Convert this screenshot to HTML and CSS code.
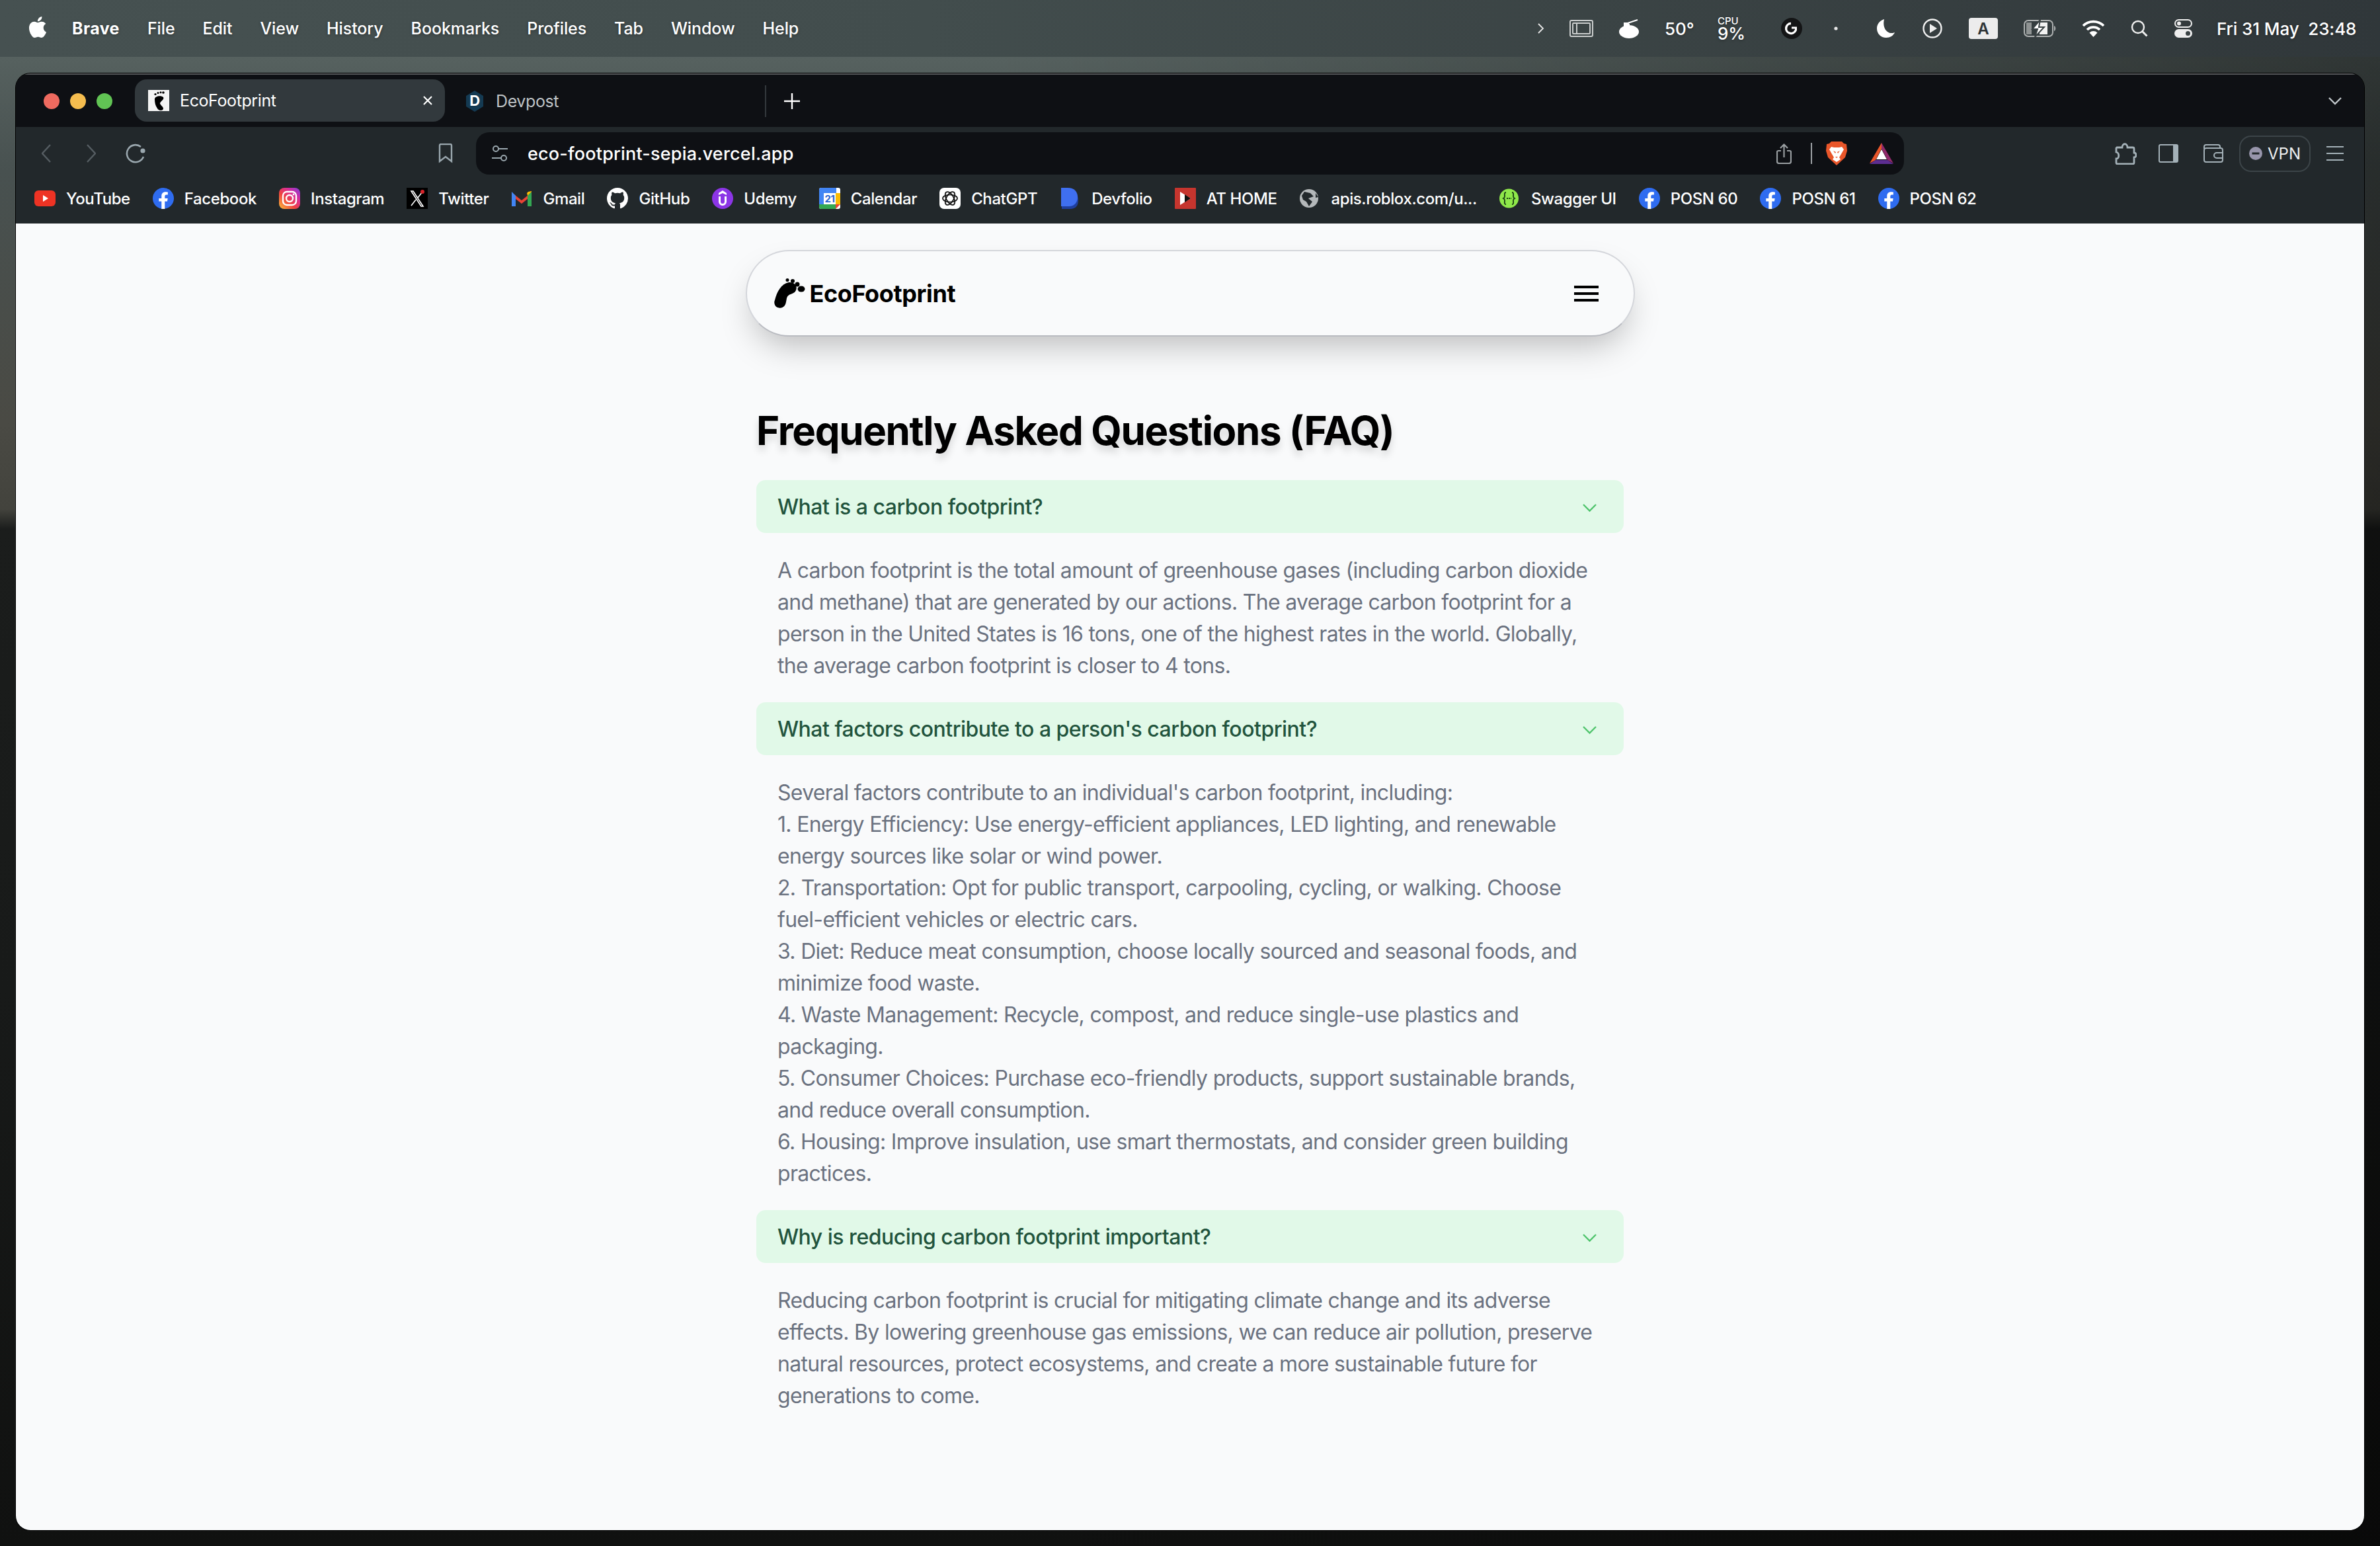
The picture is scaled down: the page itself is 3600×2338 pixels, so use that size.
FILE: index.html
```html
<!DOCTYPE html>
<html lang="en">
<head>
<meta charset="utf-8">
<title>EcoFootprint</title>
<link rel="stylesheet" href="styles.css">
</head>
<body>
<svg class="sprite" aria-hidden="true"><symbol id="fb" viewBox="0 0 32 32"><circle cx="16" cy="16" r="16" fill="#2f6cf0"/><path fill="#fff" d="M22 20.6l.7-4.6h-4.4v-3c0-1.3.6-2.5 2.6-2.5h2V6.6s-1.8-.3-3.6-.3c-3.6 0-6 2.2-6 6.2V16h-4v4.6h4V32h5V20.6z"/></symbol></svg>
<header class="menubar">
  <div class="menu-left">
    <svg class="apple" viewBox="0 0 24 24"><path fill="#fff" d="M12.152 6.896c-.948 0-2.415-1.078-3.96-1.04-2.04.027-3.91 1.183-4.961 3.014-2.117 3.675-.546 9.103 1.519 12.09 1.013 1.454 2.208 3.09 3.792 3.039 1.52-.065 2.09-.987 3.935-.987 1.831 0 2.35.987 3.96.948 1.637-.026 2.676-1.48 3.676-2.948 1.156-1.688 1.636-3.325 1.662-3.415-.039-.013-3.182-1.221-3.22-4.857-.026-3.04 2.48-4.494 2.597-4.559-1.429-2.09-3.623-2.324-4.39-2.376-2-.156-3.675 1.09-4.61 1.09zM15.53 3.83c.843-1.012 1.4-2.427 1.245-3.83-1.207.052-2.662.805-3.532 1.818-.78.896-1.454 2.338-1.273 3.714 1.338.104 2.715-.688 3.559-1.701"/></svg>
    <b class="menu-app">Brave</b><span>File</span><span>Edit</span><span>View</span><span>History</span><span>Bookmarks</span><span>Profiles</span><span>Tab</span><span>Window</span><span>Help</span>
  </div>
  <div class="status">
    <svg width="10" height="16" viewBox="0 0 10 16"><path d="M1 1l7 7-7 7" fill="none" stroke="#e8e8e8" stroke-width="1.8"/></svg>
    <svg width="36" height="26" viewBox="0 0 36 26"><g fill="none" stroke="#c9cccc" stroke-width="2"><rect x="1" y="1" width="34" height="24" rx="2"/><rect x="5" y="5" width="26" height="16" rx="1"/><path d="M11 5v16"/></g></svg>
    <svg width="30" height="30" viewBox="0 0 30 30"><ellipse cx="15" cy="20" rx="15" ry="10" fill="#fff"/><path d="M10 8l18-6M8 7h7v4H8z" fill="#fff" stroke="#fff" stroke-width="2"/></svg>
    <span class="st-text">50°</span>
    <span class="cpu"><small>CPU</small><em>9%</em></span>
    <svg width="32" height="32" viewBox="0 0 32 32"><circle cx="16" cy="16" r="16" fill="#141516"/><path d="M15 8.5a7.5 7.5 0 1 0 7 10.5" fill="none" stroke="#fff" stroke-width="3.4"/><path d="M16 13.5h8v6h-3v-3h-5z" fill="#fff"/></svg>
    <svg class="dot" width="6" height="6" viewBox="0 0 6 6"><circle cx="3" cy="3" r="2.6" fill="#e8e8e8"/></svg>
    <svg width="28" height="28" viewBox="0 0 28 28"><path fill="#fff" d="M11 0C4 2 0 8 0 14c0 8 6 14 14 14 6 0 11-3 13-8-2 1-4 1-5 1C15 21 8 13 11 0z"/></svg>
    <svg width="30" height="30" viewBox="0 0 30 30"><circle cx="15" cy="15" r="13.5" fill="none" stroke="#eee" stroke-width="2.4"/><path d="M11 8l11 7-11 7z" fill="#eee"/></svg>
    <span class="st-a">A</span>
    <svg width="50" height="26" viewBox="0 0 50 26"><rect x="1" y="1" width="43" height="24" rx="6" fill="none" stroke="#aeb1b1" stroke-width="2"/><path d="M4 4h8v18H4z" fill="#8f9393"/><path d="M24 4h12v18H24z" fill="#f2f2f2"/><path d="M46 9c3 1 3 7 0 8z" fill="#aeb1b1"/><path d="M25 0L13 14h8l-4 12 14-15h-8z" fill="#fff" stroke="#3a4244" stroke-width="2"/></svg>
    <svg width="35" height="26" viewBox="0 0 35 26"><g fill="none" stroke="#fff" stroke-width="3.6"><path d="M2 9a22 22 0 0 1 31 0"/><path d="M8 15a13.5 13.5 0 0 1 19 0"/></g><path d="M17.5 26l-6-6.500a8.500 8.500 0 0 1 12 0z" fill="#fff"/></svg>
    <svg width="26" height="26" viewBox="0 0 26 26"><circle cx="11" cy="11" r="9" fill="none" stroke="#eee" stroke-width="2.4"/><path d="M17.500 17.500l7 7" stroke="#eee" stroke-width="3"/></svg>
    <svg width="27" height="28" viewBox="0 0 27 28"><rect x="1" y="1" width="25" height="11" rx="5.500" fill="none" stroke="#eee" stroke-width="2"/><circle cx="7" cy="6.500" r="3" fill="#eee"/><rect y="15" width="27" height="13" rx="6.500" fill="#eee"/><circle cx="20.500" cy="21.500" r="3.500" fill="#3a4244"/></svg>
    <span class="st-text date">Fri 31 May&nbsp;&nbsp;23:48</span>
  </div>
</header>

<main class="window">
  <div class="tabstrip">
    <div class="lights"><i class="light red"></i><i class="light amber"></i><i class="light green"></i></div>
    <div class="tab">
      <svg class="ico" viewBox="0 0 32 32"><rect width="32" height="32" fill="#f4f4f4"/><path d="M10 14C10 9 20 8 23 11c2 3-4 6-5 9 0 3 5 5 5 8 0 4-7 4-9 0-3-4-4-9-4-14z"/><circle cx="11" cy="6.500" r="1.600"/><circle cx="15" cy="4.500" r="1.500"/><circle cx="19" cy="3.800" r="1.500"/><circle cx="23" cy="4" r="1.800"/></svg>
      <span class="tab-title">EcoFootprint</span>
      <svg class="tab-x" width="16" height="16" viewBox="0 0 16 16"><path d="M2 2l12 12M14 2L2 14" stroke="#fff" stroke-width="2.200"/></svg>
    </div>
    <div class="tab-plain">
      <svg class="ico" viewBox="0 0 32 32"><path d="M16 0l13 8v16l-13 8-13-8V8z" fill="#143a52"/><text x="16" y="23" class="dv-letter">D</text></svg>
      <span class="tab-dim">Devpost</span>
    </div>
    <i class="tab-sep"></i>
    <svg class="plus" width="24" height="24" viewBox="0 0 24 24"><path d="M12 0v24M0 12h24" stroke="#fff" stroke-width="2.400"/></svg>
    <svg class="tabs-down" width="20" height="12" viewBox="0 0 20 12"><path d="M1 1l9 9 9-9" fill="none" stroke="#c0c6ca" stroke-width="2.400"/></svg>
  </div>

  <div class="toolbar">
    <svg class="t-back" width="14" height="28" viewBox="0 0 14 28"><path d="M13 1L1 14l12 13" fill="none" stroke="#555d62" stroke-width="2.400"/></svg>
    <svg class="t-fwd" width="14" height="28" viewBox="0 0 14 28"><path d="M1 1l12 13L1 27" fill="none" stroke="#555d62" stroke-width="2.400"/></svg>
    <svg class="t-reload" width="32" height="32" viewBox="0 0 32 32"><path d="M27 21a13 13 0 1 1-4-15" fill="none" stroke="#9aa7ae" stroke-width="2.600"/><circle cx="26" cy="12" r="3.600" fill="#9aa7ae"/></svg>
    <svg class="t-mark" width="22" height="30" viewBox="0 0 22 30"><path d="M2 27V3a2 2 0 0 1 2-2h14a2 2 0 0 1 2 2v24l-9-7z" fill="none" stroke="#9aa7ae" stroke-width="2.400"/></svg>
    <div class="urlbar">
      <svg width="24" height="26" viewBox="0 0 24 26"><g fill="none" stroke="#9aa7ae" stroke-width="2"><circle cx="6" cy="6" r="4"/><circle cx="18" cy="20" r="4"/><path d="M10 6h14M0 20h14"/></g></svg>
      <span class="url">eco-footprint-sepia.vercel.app</span>
      <svg class="u-share" width="23" height="31" viewBox="0 0 23 31"><g fill="none" stroke="#9a9fa2" stroke-width="2.200"><path d="M7 11H3a2 2 0 0 0-2 2v14a3 3 0 0 0 3 3h15a3 3 0 0 0 3-3V13a2 2 0 0 0-2-2h-4"/><path d="M11.500 21V2M6 7l5.500-5.500L17 7"/></g></svg>
      <i class="u-sep"></i>
      <svg class="u-brave" width="32" height="36" viewBox="0 0 32 36"><path d="M8 0h16l3 3 4 1 1 10-3 10-13 12L3 24 0 14 1 4l4-1z" fill="#e9562a"/><path d="M8 8l4 1h8l4-1 3 4-4 7-3 5 2 3-6 4-6-4 2-3-3-5-4-7z" fill="#fff"/><path d="M11 14l4 2-1 2zM21 14l-4 2 1 2zM14 23h4l-2 2z" fill="#e9562a"/></svg>
      <svg class="u-bat" width="36" height="32" viewBox="0 0 36 32"><path d="M18 0L0 31l9-5L18 9z" fill="#e9562a"/><path d="M18 0l18 31-9-5-9-17z" fill="#8f2a6b"/><path d="M0 32h36l-9-6H9z" fill="#5c2d91"/><path d="M18 10l8 15H10z" fill="#fff"/></svg>
    </div>
    <svg class="t-ext" width="33" height="34" viewBox="0 0 33 34"><path d="M3 8h8c0-7 8-7 8 0h8a2 2 0 0 1 2 2v6c4 0 4 7 0 7v8a2 2 0 0 1-2 2H4a2 2 0 0 1-2-2v-6c5 0 5-9 0-10V9z" fill="none" stroke="#a4b1b8" stroke-width="2.800"/></svg>
    <svg class="t-side" width="30" height="28" viewBox="0 0 30 28"><rect x="1" y="1" width="28" height="26" rx="2" fill="none" stroke="#a4b1b8" stroke-width="2"/><rect x="22" y="1" width="7" height="26" fill="#a4b1b8"/></svg>
    <svg class="t-wallet" width="30" height="28" viewBox="0 0 30 28"><g fill="none" stroke="#a4b1b8" stroke-width="2"><path d="M1 7V4a3 3 0 0 1 3-3h18a3 3 0 0 1 3 3v2"/><rect x="1" y="6" width="28" height="21" rx="3"/><path d="M29 13H20a4 4 0 0 0 0 8h9"/></g></svg>
    <div class="vpn"><svg width="20" height="20" viewBox="0 0 20 20"><circle cx="10" cy="10" r="10" fill="#9795ab"/><rect x="4.500" y="8.500" width="11" height="3" fill="#22282b"/></svg><span>VPN</span></div>
    <div class="t-burger"><i></i><i></i><i></i></div>
  </div>

  <nav class="bookmarks">
    <a><svg class="ico" viewBox="0 0 32 32"><rect y="4" width="32" height="24" rx="6" fill="#ee3324"/><path d="M13 11l8 5-8 5z" fill="#fff"/></svg>YouTube</a>
    <a><svg class="ico"><use href="#fb"/></svg>Facebook</a>
    <a><svg class="ico" viewBox="0 0 32 32"><defs><linearGradient id="ig" x1="0" y1="1" x2="1" y2="0"><stop offset="0" stop-color="#fdc13a"/><stop offset=".4" stop-color="#f0433f"/><stop offset=".7" stop-color="#d62d9c"/><stop offset="1" stop-color="#7a3fe0"/></linearGradient></defs><rect width="32" height="32" rx="8" fill="url(#ig)"/><rect x="6" y="6" width="20" height="20" rx="6" fill="none" stroke="#fff" stroke-width="2.400"/><circle cx="16" cy="16" r="5" fill="none" stroke="#fff" stroke-width="2.400"/><circle cx="22" cy="10" r="1.400" fill="#fff"/></svg>Instagram</a>
    <a><svg class="ico" viewBox="0 0 32 32"><rect width="32" height="32" fill="#000"/><path d="M7 5l15 23h3L10 5zM24 6l-7 9M14 18l-7 9" fill="none" stroke="#fff" stroke-width="1.600"/><circle cx="24" cy="6" r="3" fill="#d8232a"/></svg>Twitter</a>
    <a><svg class="ico" viewBox="0 0 32 32"><path d="M1 7l15 12L31 7v5L16 24 1 12z" fill="#ea4335"/><path d="M1 6v22h6V12z" fill="#4285f4"/><path d="M31 6v22h-6V12z" fill="#34a853"/><path d="M25 12l6-6v-1l-5 1-2 2z" fill="#fbbc04"/></svg>Gmail</a>
    <a><svg class="ico" viewBox="0 0 16 16"><path fill="#fff" d="M8 0C3.58 0 0 3.58 0 8c0 3.54 2.29 6.53 5.47 7.59.4.07.55-.17.55-.38 0-.19-.01-.82-.01-1.49-2.01.37-2.53-.49-2.69-.94-.09-.23-.48-.94-.82-1.13-.28-.15-.68-.52-.01-.53.63-.01 1.08.58 1.23.82.72 1.21 1.87.87 2.33.66.07-.52.28-.87.51-1.07-1.78-.2-3.64-.89-3.64-3.95 0-.87.31-1.59.82-2.15-.08-.2-.36-1.02.08-2.12 0 0 .67-.21 2.2.82.64-.18 1.32-.27 2-.27.68 0 1.36.09 2 .27 1.53-1.04 2.2-.82 2.2-.82.44 1.1.16 1.92.08 2.12.51.56.82 1.27.82 2.15 0 3.07-1.87 3.75-3.65 3.95.29.25.54.73.54 1.48 0 1.07-.01 1.93-.01 2.2 0 .21.15.46.55.38A8.013 8.013 0 0016 8c0-4.42-3.58-8-8-8z"/></svg>GitHub</a>
    <a><svg class="ico" viewBox="0 0 32 32"><circle cx="16" cy="16" r="16" fill="#8c35e6"/><path d="M10 13v8a6 6 0 0 0 12 0v-8h-3v8a3 3 0 0 1-6 0v-8z" fill="#fff"/><path d="M16 4l6 4v3l-6-3-6 3V8z" fill="#fff"/></svg>Udemy</a>
    <a><svg class="ico" viewBox="0 0 32 32"><rect width="32" height="32" rx="3" fill="#fff"/><path d="M0 8V3a3 3 0 0 1 3-3h23v8z" fill="#4285f4"/><path d="M0 8h7v17H0z" fill="#4285f4"/><path d="M25 8h7v17h-7z" fill="#fbbc04"/><path d="M0 25h25v7H3a3 3 0 0 1-3-3z" fill="#34a853"/><path d="M25 25h7l-7 7z" fill="#ea4335"/><text x="16" y="22" class="cal-num">21</text></svg>Calendar</a>
    <a><svg class="ico" viewBox="0 0 32 32"><rect width="32" height="32" rx="7" fill="#fff"/><g fill="none" stroke="#111" stroke-width="1.700"><ellipse cx="16" cy="16" rx="11" ry="5.500"/><ellipse cx="16" cy="16" rx="11" ry="5.500" transform="rotate(60 16 16)"/><ellipse cx="16" cy="16" rx="11" ry="5.500" transform="rotate(120 16 16)"/></g></svg>ChatGPT</a>
    <a><svg class="ico" viewBox="0 0 32 32"><path d="M2 2h10c10 0 15 6 15 15 0 8-4 13-12 13H2z" fill="#1f3f9e" transform="translate(1 2)"/><path d="M2 0h10c10 0 15 6 15 14 0 8-5 14-13 14H2z" fill="#3f6ff0"/></svg>Devfolio</a>
    <a><svg class="ico" viewBox="0 0 32 32"><rect width="32" height="32" rx="1" fill="#c6352e"/><path d="M8 6l16 10L8 26z" fill="#fff"/><path d="M15 10l9 6-9 6z" fill="#111"/></svg>AT HOME</a>
    <a><svg class="ico" viewBox="0 0 32 32"><circle cx="14" cy="16" r="14" fill="#b4b8ba"/><path d="M7 6l9 2 5 5-8 3 6 5-5 7-4-7-5-3-2-6zM24 8l4 6-4 1z" fill="#22282b"/></svg>apis.roblox.com/u...</a>
    <a><svg class="ico" viewBox="0 0 32 32"><circle cx="14.500" cy="16" r="14.500" fill="#8fe84a"/><g fill="none" stroke="#173b12" stroke-width="1.800"><path d="M10 7c-3 0-2 3-2 6 0 2-2 3-2 3s2 1 2 3c0 3-1 6 2 6M19 7c3 0 2 3 2 6 0 2 2 3 2 3s-2 1-2 3c0 3 1 6-2 6"/></g><path d="M11 16h7" stroke="#173b12" stroke-width="2" stroke-dasharray="2 1"/></svg>Swagger UI</a>
    <a><svg class="ico"><use href="#fb"/></svg>POSN 60</a>
    <a><svg class="ico"><use href="#fb"/></svg>POSN 61</a>
    <a><svg class="ico"><use href="#fb"/></svg>POSN 62</a>
  </nav>

  <section class="page">
    <div class="navcard">
      <div class="brand">
        <svg width="48" height="46" viewBox="0 0 48 46"><path d="M1 33C4 20 11 8 22 6c8-1 14 5 11 12-3 7-12 4-14 12-1 5-1 8-3 11-3 5-13 5-15-1-1-3-1-5 0-7z"/><circle cx="20" cy="2.500" r="2.500"/><circle cx="28" cy="4" r="3"/><circle cx="35" cy="9" r="3.500"/><ellipse cx="41" cy="16" rx="5.500" ry="4.500"/></svg>
        <span class="brand-name">EcoFootprint</span>
      </div>
      <div class="burger"><i></i><i></i><i></i></div>
    </div>

    <div class="content">
      <h1 class="title">Frequently Asked Questions (FAQ)</h1>
      <div class="qa">
        <div class="q"><span>What is a carbon footprint?</span><svg class="chev" viewBox="0 0 32 32"><path d="M3 13l9.500 9.500L22 13" /></svg></div>
        <p class="a">A carbon footprint is the total amount of greenhouse gases (including carbon dioxide and methane) that are generated by our actions. The average carbon footprint for a person in the United States is 16 tons, one of the highest rates in the world. Globally, the average carbon footprint is closer to 4 tons.</p>
      </div>
      <div class="qa">
        <div class="q"><span>What factors contribute to a person's carbon footprint?</span><svg class="chev" viewBox="0 0 32 32"><path d="M3 13l9.500 9.500L22 13" /></svg></div>
        <p class="a">Several factors contribute to an individual's carbon footprint, including:<br>1. Energy Efficiency: Use energy-efficient appliances, LED lighting, and renewable energy sources like solar or wind power.<br>2. Transportation: Opt for public transport, carpooling, cycling, or walking. Choose fuel-efficient vehicles or electric cars.<br>3. Diet: Reduce meat consumption, choose locally sourced and seasonal foods, and minimize food waste.<br>4. Waste Management: Recycle, compost, and reduce single-use plastics and packaging.<br>5. Consumer Choices: Purchase eco-friendly products, support sustainable brands, and reduce overall consumption.<br>6. Housing: Improve insulation, use smart thermostats, and consider green building practices.</p>
      </div>
      <div class="qa">
        <div class="q"><span>Why is reducing carbon footprint important?</span><svg class="chev" viewBox="0 0 32 32"><path d="M3 13l9.500 9.500L22 13" /></svg></div>
        <p class="a">Reducing carbon footprint is crucial for mitigating climate change and its adverse effects. By lowering greenhouse gas emissions, we can reduce air pollution, preserve natural resources, protect ecosystems, and create a more sustainable future for generations to come.</p>
      </div>
    </div>
  </section>
</main>
</body>
</html>
```
FILE: styles.css
```css
* { box-sizing: border-box; }
html, body { margin: 0; padding: 0; }
body {
  width: 3600px;
  height: 2338px;
  overflow: hidden;
  font-family: Inter, "Liberation Sans", sans-serif;
  background:
    linear-gradient(90deg, rgba(0,0,0,0) 1500px, rgba(0,0,0,.45) 3600px),
    linear-gradient(180deg, #56615f 86px, #485150 260px, #4a4a44 640px, #43433d 770px, #1b1d1c 800px, #181a19 1500px, #101110 2338px);
}
.sprite { display: none; }
.ico { width: 32px; height: 32px; flex: none; display: block; }

/* macOS menu bar */
.menubar {
  height: 86px;
  display: flex;
  justify-content: space-between;
  align-items: center;
  background: linear-gradient(90deg, #465151 0, #424d4d 1400px, #3b4445 2400px, #30373a 3600px);
  color: #fff;
  font-size: 25px;
  font-weight: 500;
  letter-spacing: -.1px;
  text-shadow: 0 1px 4px rgba(0,0,0,.35);
}
.menu-left { display: flex; align-items: center; gap: 42px; padding-left: 41px; }
.apple { width: 32px; height: 32px; margin-right: -6px; margin-top: -4px; }
.menu-app { font-weight: 700; letter-spacing: .4px; }
.status {
  display: grid;
  grid-template-columns: 48px 75px 69px 80px 96px 80px 65px 69px 70px 83px 88px 74px 66px 64px 212px;
  align-items: center;
  justify-items: start;
  padding-right: 35px;
}
.st-text { font-size: 26px; font-weight: 500; }
.date { font-size: 26px; white-space: nowrap; }
.cpu { display: flex; flex-direction: column; font-weight: 500; }
.cpu small { font-size: 15px; line-height: 15px; }
.cpu em { font-style: normal; font-size: 26px; line-height: 24px; }
.st-a {
  width: 44px; height: 32px;
  border-radius: 4px;
  background: #ececec;
  color: #2d3335;
  text-shadow: none;
  font-size: 24px;
  font-weight: 600;
  display: flex; align-items: center; justify-content: center;
}

/* browser window */
.window {
  margin: 25px 0 0 24px;
  width: 3552px;
  height: 2203px;
  border-radius: 22px;
  overflow: hidden;
  display: flex;
  flex-direction: column;
  background: #22282b;
  box-shadow: 0 0 0 1px #000;
}
.tabstrip {
  height: 81px;
  flex: none;
  padding-top: 9px;
  background: #0e1014;
  border-top: 2px solid #55585a;
  display: flex;
  align-items: flex-start;
  color: #fff;
  font-size: 25px;
  font-weight: 400;
  letter-spacing: -.4px;
}
.lights { height: 62px; display: flex; align-items: center; gap: 16px; margin-left: 42px; }
.light { width: 24px; height: 24px; border-radius: 50%; display: block; }
.red { background: #ee6a5f; }
.amber { background: #f5bd4f; }
.green { background: #61c454; }
.tab {
  margin-left: 34px;
  width: 469px;
  height: 64px;
  margin-top: -2px;
  border-radius: 18px;
  background: #32393d;
  display: flex;
  align-items: center;
  padding: 0 18px 0 20px;
  gap: 16px;
}
.tab-title { flex: 1; }
.tab-plain { margin-left: 29px; height: 62px; width: 455px; display: flex; align-items: center; gap: 16px; }
.tab-dim { color: #bdc2c5; }
.dv-letter { font: 700 22px Inter, sans-serif; fill: #fff; text-anchor: middle; }
.cal-num { font: 700 15px Inter, sans-serif; fill: #2b63d0; text-anchor: middle; }
.tab-sep { width: 2px; height: 48px; background: #33383c; margin-top: 7px; display: block; }
.plus { margin: 19px 0 0 27px; }
.tabs-down { margin: 25px 34px 0 auto; }

.toolbar {
  height: 72px;
  flex: none;
  padding-top: 8px;
  display: flex;
  align-items: center;
}
.t-back { margin-left: 39px; }
.t-fwd { margin-left: 54px; }
.t-reload { margin-left: 45px; }
.t-mark { margin-left: 441px; }
.urlbar {
  margin-left: 35px;
  width: 2160px;
  height: 64px;
  border-radius: 20px;
  background: #0e1014;
  display: flex;
  align-items: center;
  padding: 0 16px 0 24px;
}
.url { margin-left: 30px; color: #fff; font-size: 27px; font-weight: 500; letter-spacing: .2px; }
.u-share { margin-left: auto; }
.u-sep { width: 2px; height: 32px; margin-left: 29px; background: #9a9fa2; display: block; }
.u-brave { margin-left: 21px; }
.u-bat { margin-left: 34px; }
.t-ext { margin-left: 319px; }
.t-side { margin-left: 33px; }
.t-wallet { margin-left: 38px; }
.vpn {
  margin-left: 24px;
  width: 108px;
  height: 55px;
  border: 2px solid #3c4448;
  border-radius: 18px;
  display: flex;
  align-items: center;
  padding-left: 13px;
  gap: 8px;
  color: #eef0f1;
  font-size: 24px;
  font-weight: 400;
}
.t-burger { margin-left: 24px; width: 26px; display: flex; flex-direction: column; gap: 8px; }
.t-burger i { display: block; height: 2px; background: #a4b1b8; }

.bookmarks {
  height: 74px;
  flex: none;
  padding: 0 0 2px 28px;
  display: flex;
  align-items: center;
  gap: 34px;
  color: #fff;
  font-size: 24px;
  font-weight: 500;
  letter-spacing: -.4px;
}
.bookmarks a { display: flex; align-items: center; gap: 16px; white-space: nowrap; }

/* page */
.page {
  flex: 1;
  background: #f9fafb;
  display: flex;
  flex-direction: column;
  align-items: center;
}
.navcard {
  margin-top: 40px;
  width: 1345px;
  height: 131px;
  flex: none;
  border: 2px solid #d4d6db;
  border-bottom-color: #b9bbc1;
  border-radius: 66px;
  background: #f9fafb;
  box-shadow: 0 25px 50px -12px rgba(0,0,0,.25);
  display: flex;
  align-items: center;
  justify-content: space-between;
  padding: 0 53px 0 41px;
}
.brand { display: flex; align-items: center; gap: 6px; }
.brand svg { display: block; }
.brand-name { font-size: 36px; font-weight: 700; color: #000; letter-spacing: -.4px; }
.burger { width: 37px; display: flex; flex-direction: column; gap: 6px; }
.burger i { display: block; height: 4px; background: #000; }
.content { width: 1312px; margin-top: 106px; }
.title {
  margin: 0 0 39px;
  font-size: 60px;
  line-height: 72px;
  font-weight: 700;
  letter-spacing: -1.36px;
  color: #000;
  text-shadow: 0 8px 12px rgba(0,0,0,.15);
}
.q {
  height: 80px;
  padding: 0 32px;
  border-radius: 14px;
  background: #e1f9e8;
  display: flex;
  align-items: center;
  justify-content: space-between;
  color: #22543d;
  font-size: 32px;
  font-weight: 500;
  letter-spacing: -.5px;
}
.chev { width: 32px; height: 32px; display: block; }
.chev path { fill: none; stroke: #4fc46c; stroke-width: 2.4; }
.a {
  margin: 0;
  padding: 33px 32px 31px;
  color: #6b7280;
  font-size: 32px;
  line-height: 48px;
  letter-spacing: -.7px;
}
```
